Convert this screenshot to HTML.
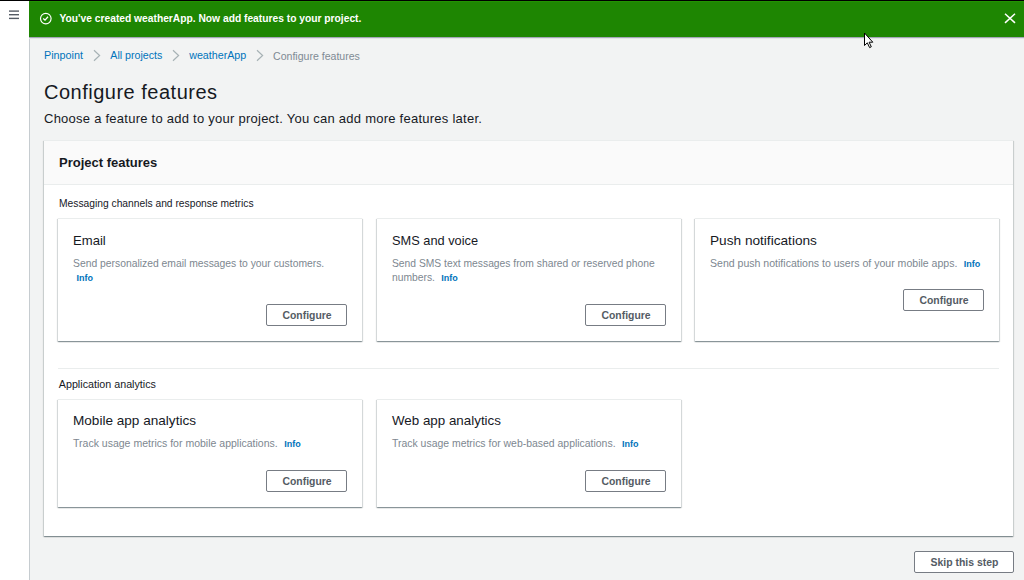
<!DOCTYPE html>
<html>
<head>
<meta charset="utf-8">
<style>
html,body{margin:0;padding:0;}
body{width:1024px;height:580px;overflow:hidden;position:relative;background:#f2f3f3;font-family:"Liberation Sans",sans-serif;color:#16191f;}
.a{position:absolute;}
.t{position:absolute;white-space:nowrap;line-height:1;}
#topline{left:0;top:0;width:1024px;height:1px;background:#000;}
#side{left:0;top:1px;width:29px;height:579px;background:#fff;}
#sideline{left:29px;top:37px;width:1px;height:543px;background:#c6ccd0;}
#flash{left:29px;top:1px;width:995px;height:36px;background:#1e8602;}
#flashshadow{left:29px;top:37px;width:995px;height:1px;background:#a4a7b8;border-bottom:1px solid #e2e5e5;}
.link{color:#0073bb;}
.gray{color:#687078;}
.panel{background:#fff;box-shadow:0 1px 1px 0 rgba(0,28,36,.3),1px 1px 1px 0 rgba(0,28,36,.12),-1px 1px 1px 0 rgba(0,28,36,.12);border-top:1px solid #eaeded;box-sizing:border-box;}
.card{position:absolute;background:#fff;box-shadow:0 1px 1px 0 rgba(0,28,36,.3),1px 1px 1px 0 rgba(0,28,36,.12),-1px 1px 1px 0 rgba(0,28,36,.12);border-top:1px solid #eaeded;box-sizing:border-box;}
.btn{position:absolute;box-sizing:border-box;border:1px solid #777c84;border-radius:2px;background:#fff;color:#545b64;font-weight:bold;font-size:10.4px;line-height:1;white-space:nowrap;}
.btn span{position:absolute;top:6px;}
.ctitle{position:absolute;left:15px;top:14.5px;font-size:13.3px;line-height:1;white-space:nowrap;color:#16191f;}
.cdesc{position:absolute;left:15px;top:37.7px;font-size:10.5px;line-height:14.6px;white-space:nowrap;color:#7d8790;}
.info{color:#0073bb;font-weight:bold;font-size:9px;margin-left:3.5px;}
</style>
</head>
<body>
<div class="a" id="topline"></div>
<div class="a" id="side"></div>
<div class="a" id="sideline"></div>
<!-- hamburger -->
<svg class="a" style="left:0;top:0" width="29" height="30">
  <g stroke="#545b64" stroke-width="1.4">
    <line x1="9" y1="11.1" x2="19" y2="11.1"/>
    <line x1="9" y1="14.7" x2="19" y2="14.7"/>
    <line x1="9" y1="18.4" x2="19" y2="18.4"/>
  </g>
</svg>
<div class="a" id="flash"></div>
<div class="a" id="flashshadow"></div>
<div class="a" style="left:29px;top:1px;width:995px;height:1px;background:#229202;"></div>
<svg class="a" style="left:36px;top:9px" width="20" height="20">
  <circle cx="9.8" cy="9.6" r="5.3" fill="none" stroke="#fff" stroke-width="1.15"/>
  <polyline points="7.2,9.6 9,11.1 12,7.8" fill="none" stroke="#fff" stroke-width="1.3"/>
</svg>
<div class="t" style="left:59.5px;top:14px;font-size:10.25px;font-weight:bold;color:#fff;">You've created weatherApp. Now add features to your project.</div>
<svg class="a" style="left:1000px;top:8px" width="20" height="20">
  <g stroke="#fff" stroke-width="1.5">
    <line x1="5" y1="5.8" x2="15" y2="14.9"/>
    <line x1="15" y1="5.8" x2="5" y2="14.9"/>
  </g>
</svg>

<!-- breadcrumbs -->
<div class="t link" style="left:44px;top:50px;font-size:10.8px;">Pinpoint</div>
<svg class="a" style="left:90px;top:48px" width="14" height="16"><polyline points="4,2.3 9.6,7.5 4,12.7" fill="none" stroke="#a7b2b5" stroke-width="1.2"/></svg>
<div class="t link" style="left:110.3px;top:50px;font-size:10.67px;">All projects</div>
<svg class="a" style="left:169px;top:48px" width="14" height="16"><polyline points="4,2.3 9.6,7.5 4,12.7" fill="none" stroke="#a7b2b5" stroke-width="1.2"/></svg>
<div class="t link" style="left:189.2px;top:50px;font-size:10.7px;">weatherApp</div>
<svg class="a" style="left:253px;top:48px" width="14" height="16"><polyline points="4,2.3 9.6,7.5 4,12.7" fill="none" stroke="#a7b2b5" stroke-width="1.2"/></svg>
<div class="t" style="left:273px;top:50.5px;font-size:10.57px;color:#7f8a94;">Configure features</div>

<div class="t" style="left:44px;top:82px;font-size:20px;letter-spacing:0.5px;">Configure features</div>
<div class="t" style="left:44px;top:112px;font-size:13px;letter-spacing:0.25px;">Choose a feature to add to your project. You can add more features later.</div>

<!-- panel -->
<div class="a panel" style="left:44px;top:140px;width:969px;height:396px;"></div>
<div class="a" style="left:44px;top:141px;width:969px;height:43px;background:#fafafa;border-bottom:1px solid #eaeded;"></div>
<div class="t" style="left:59px;top:156px;font-size:13px;font-weight:bold;">Project features</div>
<div class="t" style="left:59px;top:199px;font-size:10.27px;color:#16191f;">Messaging channels and response metrics</div>

<div class="card" style="left:58px;top:218px;width:304px;height:123px;">
  <div class="ctitle" style="font-size:13.1px">Email</div>
  <div class="cdesc" style="font-size:10.35px">Send personalized email messages to your customers.<br><span class="info">Info</span></div>
  <div class="btn" style="left:208px;top:85px;width:81px;height:22px;"><span style="left:15.5px">Configure</span></div>
</div>
<div class="card" style="left:377px;top:218px;width:304px;height:123px;">
  <div class="ctitle" style="font-size:12.8px;top:15.6px">SMS and voice</div>
  <div class="cdesc" style="font-size:10.31px">Send SMS text messages from shared or reserved phone<br>numbers. <span class="info">Info</span></div>
  <div class="btn" style="left:208px;top:85px;width:81px;height:22px;"><span style="left:15.5px">Configure</span></div>
</div>
<div class="card" style="left:695px;top:218px;width:304px;height:123px;">
  <div class="ctitle" style="font-size:13.65px">Push notifications</div>
  <div class="cdesc" style="font-size:10.55px;top:36.7px">Send push notifications to users of your mobile apps. <span class="info">Info</span></div>
  <div class="btn" style="left:208px;top:70px;width:81px;height:22px;"><span style="left:15.5px">Configure</span></div>
</div>

<div class="a" style="left:58px;top:368px;width:941px;height:1px;background:#eaeded;"></div>
<div class="t" style="left:58.8px;top:378.7px;font-size:10.73px;color:#16191f;">Application analytics</div>

<div class="card" style="left:58px;top:399px;width:304px;height:108px;">
  <div class="ctitle" style="font-size:13.58px;top:14px">Mobile app analytics</div>
  <div class="cdesc" style="font-size:10.53px;top:35.7px">Track usage metrics for mobile applications. <span class="info">Info</span></div>
  <div class="btn" style="left:208px;top:70px;width:81px;height:22px;"><span style="left:15.5px">Configure</span></div>
</div>
<div class="card" style="left:377px;top:399px;width:304px;height:108px;">
  <div class="ctitle" style="font-size:13.37px;top:14px">Web app analytics</div>
  <div class="cdesc" style="font-size:10.44px;top:36.7px">Track usage metrics for web-based applications. <span class="info">Info</span></div>
  <div class="btn" style="left:208px;top:70px;width:81px;height:22px;"><span style="left:15.5px">Configure</span></div>
</div>

<div class="btn" style="left:914px;top:551px;width:100px;height:22px;"><span style="left:15.5px;font-size:10.46px">Skip this step</span></div>

<!-- cursor -->
<svg class="a" style="left:860px;top:30px" width="20" height="22">
  <path d="M4.5,3 L4.5,15.5 L7.3,12.8 L9.6,17.6 L11.3,16.8 L9.1,12.2 L12.8,12.2 Z" fill="#fff" stroke="#000" stroke-width="1" stroke-linejoin="round"/>
</svg>
</body>
</html>
